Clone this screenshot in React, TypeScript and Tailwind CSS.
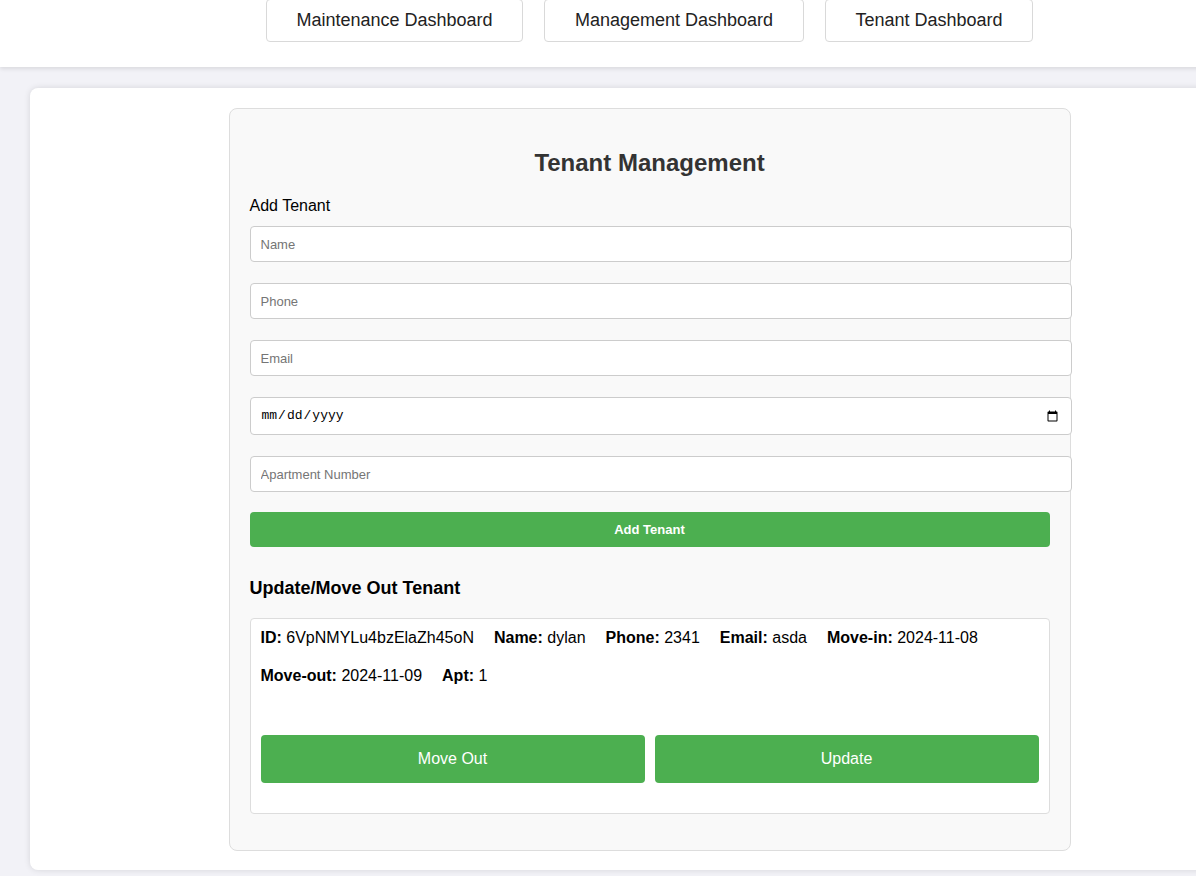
import React from "react";

export default function App() {
  const nav = [
    { label: "Maintenance Dashboard", w: "w-[257px]" },
    { label: "Management Dashboard", w: "w-[260px]" },
    { label: "Tenant Dashboard", w: "w-[208px]" },
  ];
  const inputCls =
    "block w-[822px] h-[36px] px-[10px] border border-[#ccc] rounded-[4px] bg-white text-[13px] text-[#222] placeholder:text-[#757575] outline-none";
  return (
    <div
      className="w-[1196px] h-[876px] overflow-hidden bg-[#f2f2f7]"
      style={{ fontFamily: '"Liberation Sans", Arial, sans-serif' }}
    >
      <div className="w-[1299px]">
        <header className="h-[67px] bg-white shadow-[0_2px_4px_rgba(0,0,0,0.1)] flex justify-center gap-[21px] relative z-10">
          {nav.map((n) => (
            <button
              key={n.label}
              className={`${n.w} h-[43px] -mt-[1px] border border-[#d9d9d9] rounded-[4px] bg-white text-[18px] text-[#222]`}
            >
              {n.label}
            </button>
          ))}
        </header>
        <div className="px-[30px] pt-[21px]">
          <div className="bg-white rounded-[8px] shadow-[0_0_6px_rgba(0,0,0,0.12)] h-[782px] pt-[20px] flex justify-center">
            <div className="w-[842px] h-[743px] bg-[#f9f9f9] border border-[#ddd] rounded-[8px] p-[20px]">
              <h2 className="text-[24px] leading-[28px] font-bold text-[#333] text-center mt-[20px]">
                Tenant Management
              </h2>
              <div className="text-[16px] leading-[18px] text-black mt-[20px] mb-[11px]">
                Add Tenant
              </div>
              <input className={`${inputCls} h-[35px] mb-[21px]`} placeholder="Name" />
              <input className={`${inputCls} mb-[21px]`} placeholder="Phone" />
              <input className={`${inputCls} mb-[21px]`} placeholder="Email" />
              <input
                type="date"
                className="block w-[822px] h-[38px] px-[10px] border border-[#ccc] rounded-[4px] bg-white text-[13px] text-black outline-none mb-[21px] font-mono"
              />
              <input className={`${inputCls} mb-[20px]`} placeholder="Apartment Number" />
              <button className="block w-[800px] h-[35px] bg-[#4caf50] text-white text-[13px] font-bold rounded-[4px]">
                Add Tenant
              </button>
              <h3 className="text-[18px] leading-[22px] font-bold text-black mt-[30px] mb-[19px]">
                Update/Move Out Tenant
              </h3>
              <div className="w-[800px] bg-white border border-[#ddd] rounded-[4px] p-[10px] pb-[30px]">
                <div className="flex flex-wrap gap-x-[20px] gap-y-[20px] text-[16px] leading-[18px] text-black">
                  <span><b>ID:</b> 6VpNMYLu4bzElaZh45oN</span>
                  <span><b>Name:</b> dylan</span>
                  <span><b>Phone:</b> 2341</span>
                  <span><b>Email:</b> asda</span>
                  <span><b>Move-in:</b> 2024-11-08</span>
                  <span><b>Move-out:</b> 2024-11-09</span>
                  <span><b>Apt:</b> 1</span>
                </div>
                <div className="flex gap-[10px] mt-[50px]">
                  <button className="flex-1 h-[48px] bg-[#4caf50] text-white text-[16px] rounded-[4px]">
                    Move Out
                  </button>
                  <button className="flex-1 h-[48px] bg-[#4caf50] text-white text-[16px] rounded-[4px]">
                    Update
                  </button>
                </div>
              </div>
            </div>
          </div>
        </div>
      </div>
    </div>
  );
}
